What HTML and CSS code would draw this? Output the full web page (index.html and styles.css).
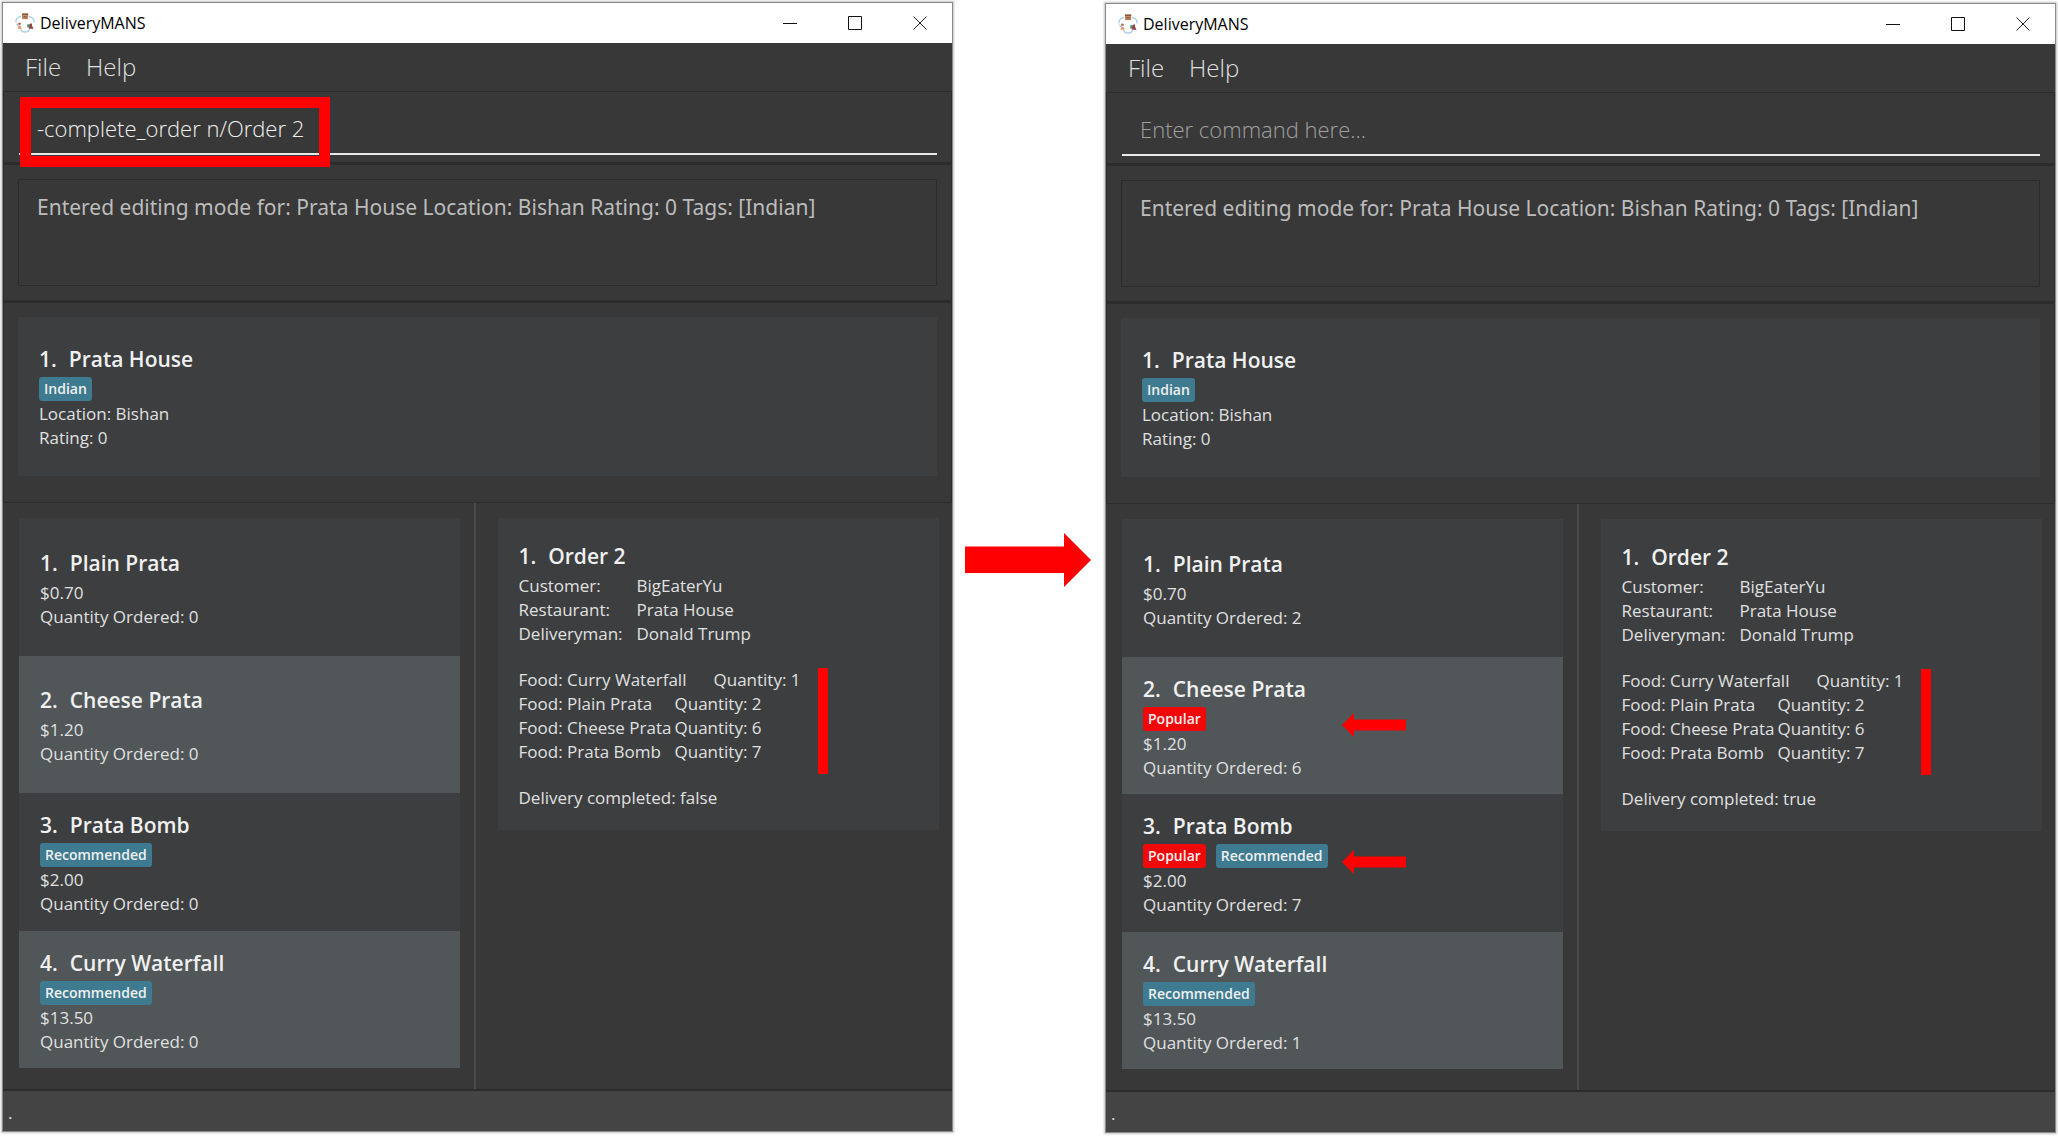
FILE: index.html
```html
<!DOCTYPE html>
<html lang="en">
<head>
<meta charset="utf-8">
<title>DeliveryMANS – completing an order</title>
<link rel="stylesheet" href="styles.css">
</head>
<body>
<svg class="symbols" aria-hidden="true">
  <symbol id="logo" viewBox="0 0 20 20">
    <g fill="none" stroke="#a9cdea" stroke-width="1.4">
      <path d="M6 3.600C2.400 3.600.6 6.400 1 9.300"/>
      <path d="M14 3.600c3.600 0 5.400 2.800 5 5.700"/>
      <path d="M1.600 10.500c.4 1.300 1.200 2 2.200 2.600"/>
      <path d="M5.800 15.500c.2 4.700 8.200 4.700 8.600.3"/>
    </g>
    <path fill="#c08a64" d="M7 .6h6.200v5.600H7z"/>
    <path fill="#8c5638" d="M7 .4h6.200V2H7zM8.400 3.300h3.400v1.300H8.400z"/>
    <circle cx="4.500" cy="10.800" r="1.400" fill="#b9724e"/>
    <path fill="#e59a6d" d="M2.600 15.800c0-4 3.900-4 3.900 0z"/>
    <path fill="#3f9a62" d="M12.300 11.200h3v3.400h-3z"/>
    <path fill="#9c3b4c" d="M15.200 10.600h1.800v2.200l1.600 3h-4.800z"/>
  </symbol>
  <symbol id="minimize" viewBox="0 0 14 14"><path d="M0 7.500h14" fill="none" stroke="#111"/></symbol>
  <symbol id="maximize" viewBox="0 0 14 14"><path d="M.5.5h13v13H.5z" fill="none" stroke="#111"/></symbol>
  <symbol id="close" viewBox="0 0 14 14"><path d="M.5.5l13 13M13.500.5l-13 13" fill="none" stroke="#222"/></symbol>
  <symbol id="pointer" viewBox="0 0 64 24"><path d="M0 12L12 0v6.500h52v11H12V24z" fill="#f00"/></symbol>
</svg>

<main class="stage">
  <section class="window" aria-label="Before">
    <header class="titlebar">
      <svg class="logo"><use href="#logo"/></svg>
      <span class="app-name">DeliveryMANS</span>
      <button class="control" aria-label="Minimize"><svg><use href="#minimize"/></svg></button>
      <button class="control" aria-label="Maximize"><svg><use href="#maximize"/></svg></button>
      <button class="control" aria-label="Close"><svg><use href="#close"/></svg></button>
    </header>
    <nav class="menu"><button>File</button><button>Help</button></nav>
    <div class="command">
      <input type="text" aria-label="Command" placeholder="Enter command here..." value="-complete_order n/Order 2">
      <span class="highlight"></span>
    </div>
    <div class="result"><output>Entered editing mode for: Prata House Location: Bishan Rating: 0 Tags: [Indian]</output></div>
    <div class="restaurant">
      <article class="card">
        <h2><span>1.</span>Prata House</h2>
        <div class="tags"><span class="tag">Indian</span></div>
        <p>Location: Bishan</p>
        <p>Rating: 0</p>
      </article>
    </div>
    <div class="panels">
      <div class="foods">
        <article class="card">
          <h2><span>1.</span>Plain Prata</h2>
          <p>$0.70</p>
          <p>Quantity Ordered: 0</p>
        </article>
        <article class="card">
          <h2><span>2.</span>Cheese Prata</h2>
          <p>$1.20</p>
          <p>Quantity Ordered: 0</p>
        </article>
        <article class="card">
          <h2><span>3.</span>Prata Bomb</h2>
          <div class="tags"><span class="tag">Recommended</span></div>
          <p>$2.00</p>
          <p>Quantity Ordered: 0</p>
        </article>
        <article class="card">
          <h2><span>4.</span>Curry Waterfall</h2>
          <div class="tags"><span class="tag">Recommended</span></div>
          <p>$13.50</p>
          <p>Quantity Ordered: 0</p>
        </article>
      </div>
      <div class="orders">
        <article class="card order">
          <h2><span>1.</span>Order 2</h2>
          <dl>
            <dt>Customer:</dt><dd>BigEaterYu</dd>
            <dt>Restaurant:</dt><dd>Prata House</dd>
            <dt>Deliveryman:</dt><dd>Donald Trump</dd>
          </dl>
          <ul>
            <li>Food: Curry Waterfall&#9;Quantity: 1</li>
            <li>Food: Plain Prata&#9;Quantity: 2</li>
            <li>Food: Cheese Prata&#9;Quantity: 6</li>
            <li>Food: Prata Bomb&#9;Quantity: 7</li>
          </ul>
          <p>Delivery completed: false</p>
          <span class="marker"></span>
        </article>
      </div>
    </div>
    <footer class="status">.</footer>
  </section>

  <svg class="transition" viewBox="0 0 126 54" role="img" aria-label="leads to"><path d="M0 13.500h99V0l27 27-27 27V40H0z" fill="#f00"/></svg>

  <section class="window after" aria-label="After">
    <header class="titlebar">
      <svg class="logo"><use href="#logo"/></svg>
      <span class="app-name">DeliveryMANS</span>
      <button class="control" aria-label="Minimize"><svg><use href="#minimize"/></svg></button>
      <button class="control" aria-label="Maximize"><svg><use href="#maximize"/></svg></button>
      <button class="control" aria-label="Close"><svg><use href="#close"/></svg></button>
    </header>
    <nav class="menu"><button>File</button><button>Help</button></nav>
    <div class="command">
      <input type="text" aria-label="Command" placeholder="Enter command here...">
    </div>
    <div class="result"><output>Entered editing mode for: Prata House Location: Bishan Rating: 0 Tags: [Indian]</output></div>
    <div class="restaurant">
      <article class="card">
        <h2><span>1.</span>Prata House</h2>
        <div class="tags"><span class="tag">Indian</span></div>
        <p>Location: Bishan</p>
        <p>Rating: 0</p>
      </article>
    </div>
    <div class="panels">
      <div class="foods">
        <article class="card">
          <h2><span>1.</span>Plain Prata</h2>
          <p>$0.70</p>
          <p>Quantity Ordered: 2</p>
        </article>
        <article class="card">
          <h2><span>2.</span>Cheese Prata</h2>
          <div class="tags"><span class="tag popular">Popular</span></div>
          <p>$1.20</p>
          <p>Quantity Ordered: 6</p>
          <svg class="pointer"><use href="#pointer"/></svg>
        </article>
        <article class="card">
          <h2><span>3.</span>Prata Bomb</h2>
          <div class="tags"><span class="tag popular">Popular</span><span class="tag">Recommended</span></div>
          <p>$2.00</p>
          <p>Quantity Ordered: 7</p>
          <svg class="pointer"><use href="#pointer"/></svg>
        </article>
        <article class="card">
          <h2><span>4.</span>Curry Waterfall</h2>
          <div class="tags"><span class="tag">Recommended</span></div>
          <p>$13.50</p>
          <p>Quantity Ordered: 1</p>
        </article>
      </div>
      <div class="orders">
        <article class="card order">
          <h2><span>1.</span>Order 2</h2>
          <dl>
            <dt>Customer:</dt><dd>BigEaterYu</dd>
            <dt>Restaurant:</dt><dd>Prata House</dd>
            <dt>Deliveryman:</dt><dd>Donald Trump</dd>
          </dl>
          <ul>
            <li>Food: Curry Waterfall&#9;Quantity: 1</li>
            <li>Food: Plain Prata&#9;Quantity: 2</li>
            <li>Food: Cheese Prata&#9;Quantity: 6</li>
            <li>Food: Prata Bomb&#9;Quantity: 7</li>
          </ul>
          <p>Delivery completed: true</p>
          <span class="marker"></span>
        </article>
      </div>
    </div>
    <footer class="status">.</footer>
  </section>
</main>
</body>
</html>
```
FILE: styles.css
```css
* { box-sizing: border-box; }

body {
  margin: 0;
  background: #fff;
  color: #e0e0e0;
  font: 17px/24px "Open Sans", "Noto Sans", sans-serif;
}

h2, p, dl, dd, ul { margin: 0; }

button {
  border: 0;
  background: none;
  color: inherit;
  font: inherit;
}

.symbols {
  position: absolute;
  width: 0;
  height: 0;
}

.stage {
  display: grid;
  grid-template-columns: minmax(0, 1fr) 152px minmax(0, 1fr);
  min-height: 100vh;
  padding: 2px 2px 4px;
}

/* Application window */
.window {
  display: flex;
  flex-direction: column;
  border: 1px solid #8a8a8a;
  background: #383838;
  box-shadow: 0 0 2px 1px #c4c4c4;
}

.after { margin: 1px 0 -1px; }

.titlebar {
  display: flex;
  align-items: center;
  height: 40px;
  padding-left: 12px;
  background: #fff;
  color: #000;
}

.logo {
  width: 20px;
  height: 20px;
}

.app-name {
  flex: 1;
  padding-left: 5px;
  font-size: 16px;
}

.control {
  display: grid;
  place-items: center;
  width: 65px;
  height: 40px;
  padding: 0;
}

.control svg {
  width: 14px;
  height: 14px;
}

.menu {
  display: flex;
  gap: 25px;
  height: 49px;
  padding: 0 22px;
  border-bottom: 1px solid #2c2c2c;
}

.menu button {
  padding: 0;
  font-size: 24px;
  font-weight: 300;
}

.command {
  position: relative;
  padding: 11px 14px 7px 15px;
  border: solid #2c2c2c;
  border-width: 0 1px 3px;
}

.command input {
  display: block;
  width: 100%;
  height: 52px;
  padding: 0 18px;
  border: 0;
  border-bottom: 2px solid #e8e8e8;
  background: none;
  color: #f0f0f0;
  font: 300 22px/30px "Open Sans", "Noto Sans", sans-serif;
}

.command input::placeholder {
  color: #a0a0a0;
  opacity: 1;
}

.highlight {
  position: absolute;
  top: 5px;
  left: 16px;
  width: 310px;
  height: 70px;
  border: 11px solid #f00;
}

.result {
  padding: 14px;
  border: solid #2c2c2c;
  border-width: 0 1px 3px;
}

.result output {
  display: block;
  min-height: 107px;
  padding: 12px 18px;
  border: 1px solid #2c2c2c;
  color: #bcbcbc;
  font-family: "Noto Sans", "Open Sans", sans-serif;
  font-size: 21px;
  line-height: 30px;
}

.restaurant {
  padding: 14px 14px 26px;
  border: solid #2c2c2c;
  border-width: 0 1px 1px;
}

/* Cards */
.card {
  position: relative;
  display: flex;
  flex-direction: column;
  justify-content: center;
  padding: 3px 21px 0;
  background: #3c3e3f;
}

.restaurant .card {
  min-height: 159px;
  padding-top: 0;
}

h2 {
  margin-bottom: 3px;
  color: #f0f0f0;
  font-size: 21px;
  font-weight: 600;
  line-height: 30px;
}

h2 span { margin-right: 12px; }

.tags {
  display: flex;
  gap: 10px;
  margin-bottom: 1px;
}

.tag {
  padding: 0 5px;
  border-radius: 3px;
  background: #3e7b91;
  color: #f0f0f0;
  font-size: 14px;
  font-weight: 600;
}

.popular { background: #f00808; }

.panels {
  display: grid;
  flex: 1;
  grid-template-columns: calc(50% - 2px) minmax(0, 1fr);
}

.foods {
  display: grid;
  grid-template-rows: repeat(4, 1fr);
  padding: 15px 14px 21px 16px;
  border-right: 2px solid #4a4a4a;
}

.foods .card:nth-child(even) { background: #515658; }

.orders { padding: 15px 13px 21px 22px; }

.order { min-height: 312px; }

dl {
  display: grid;
  grid-template-columns: 118px 1fr;
}

ul {
  margin: 22px 0;
  padding: 0;
  list-style: none;
}

li {
  tab-size: 39px;
  white-space: pre;
}

.status {
  height: 42px;
  padding: 10px 5px;
  border-top: 2px solid #2c2c2c;
  background: #444;
}

/* Annotations laid over the windows */
.transition {
  width: 126px;
  height: 54px;
  margin: 531px 0 0 12px;
}

.pointer {
  position: absolute;
  top: 56px;
  left: 220px;
  width: 64px;
  height: 24px;
}

.marker {
  position: absolute;
  top: 150px;
  left: 320px;
  width: 10px;
  height: 106px;
  background: #f00;
}
```
